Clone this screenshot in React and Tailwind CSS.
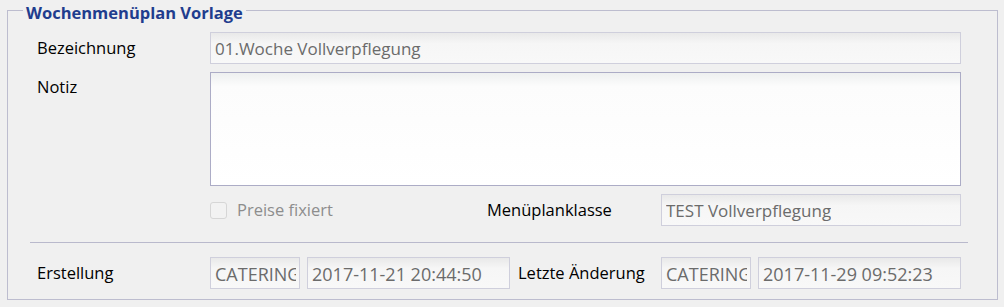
const font = { fontFamily: '"Open Sans", "Noto Sans", sans-serif' };

function Field({ value, className = "" }) {
  return (
    <div
      className={`flex h-[32px] items-center border border-[#cfcfdc] bg-[linear-gradient(to_bottom,#e9e9e9,#f6f6f6_35%,#f8f8f8)] pl-[4px] pr-[4px] pt-[2px] text-[#6b6b6b] ${className}`}
    >
      <span className="block overflow-hidden whitespace-nowrap">{value}</span>
    </div>
  );
}

function Label({ children, className = "" }) {
  return <span className={`text-[16.5px] text-black ${className}`}>{children}</span>;
}

export default function App() {
  return (
    <div className="h-[307px] w-[1004px] bg-[#f0f0f0]" style={font}>
      <fieldset className="ml-[7px] w-[991px] border border-[#bdbdcf] pb-[10px]">
        <legend className="ml-[15px] px-[3px] pt-[4px] text-[16.5px] font-bold leading-[17px] text-[#1f3d8e]">
          Wochenmenüplan Vorlage
        </legend>

        <div className="flex flex-col gap-[8px] pl-[29px] pr-[36px] pt-[11px]">
          <div className="flex h-[32px] items-center">
            <Label className="w-[173px]">Bezeichnung</Label>
            <Field value="01.Woche Vollverpflegung" className="flex-1 text-[17px]" />
          </div>

          <div className="flex">
            <Label className="w-[173px] pt-[3px]">Notiz</Label>
            <div className="h-[114px] flex-1 border border-[#acacc6] bg-[linear-gradient(to_bottom,#eef0f0,#fcfcfc_12%,#ffffff)]" />
          </div>

          <div className="flex h-[32px] items-center">
            <div className="ml-[173px] flex w-[277px] items-center gap-[10px]">
              <span className="h-[17px] w-[17px] rounded-[3px] border border-[#d6d6d6] bg-[#f2f2f2]" />
              <span className="text-[16.5px] text-[#8d8d8d]">Preise fixiert</span>
            </div>
            <Label className="w-[174px]">Menüplanklasse</Label>
            <Field value="TEST Vollverpflegung" className="flex-1 text-[17px]" />
          </div>
        </div>

        <div className="ml-[22px] mr-[29px] mt-[16px] h-px bg-[#b9b9cc]" />

        <div className="mt-[14px] flex h-[32px] items-center pl-[29px] pr-[36px]">
          <Label className="w-[173px]">Erstellung</Label>
          <Field value="CATERING" className="w-[90px] !pr-[3px] text-[18px]" />
          <Field value="2017-11-21 20:44:50" className="ml-[7px] w-[203px] text-[18px]" />
          <Label className="ml-[8px] w-[143px]">Letzte Änderung</Label>
          <Field value="CATERING" className="w-[90px] !pr-[3px] text-[18px]" />
          <Field value="2017-11-29 09:52:23" className="ml-[7px] w-[203px] text-[18px]" />
        </div>
      </fieldset>
    </div>
  );
}
